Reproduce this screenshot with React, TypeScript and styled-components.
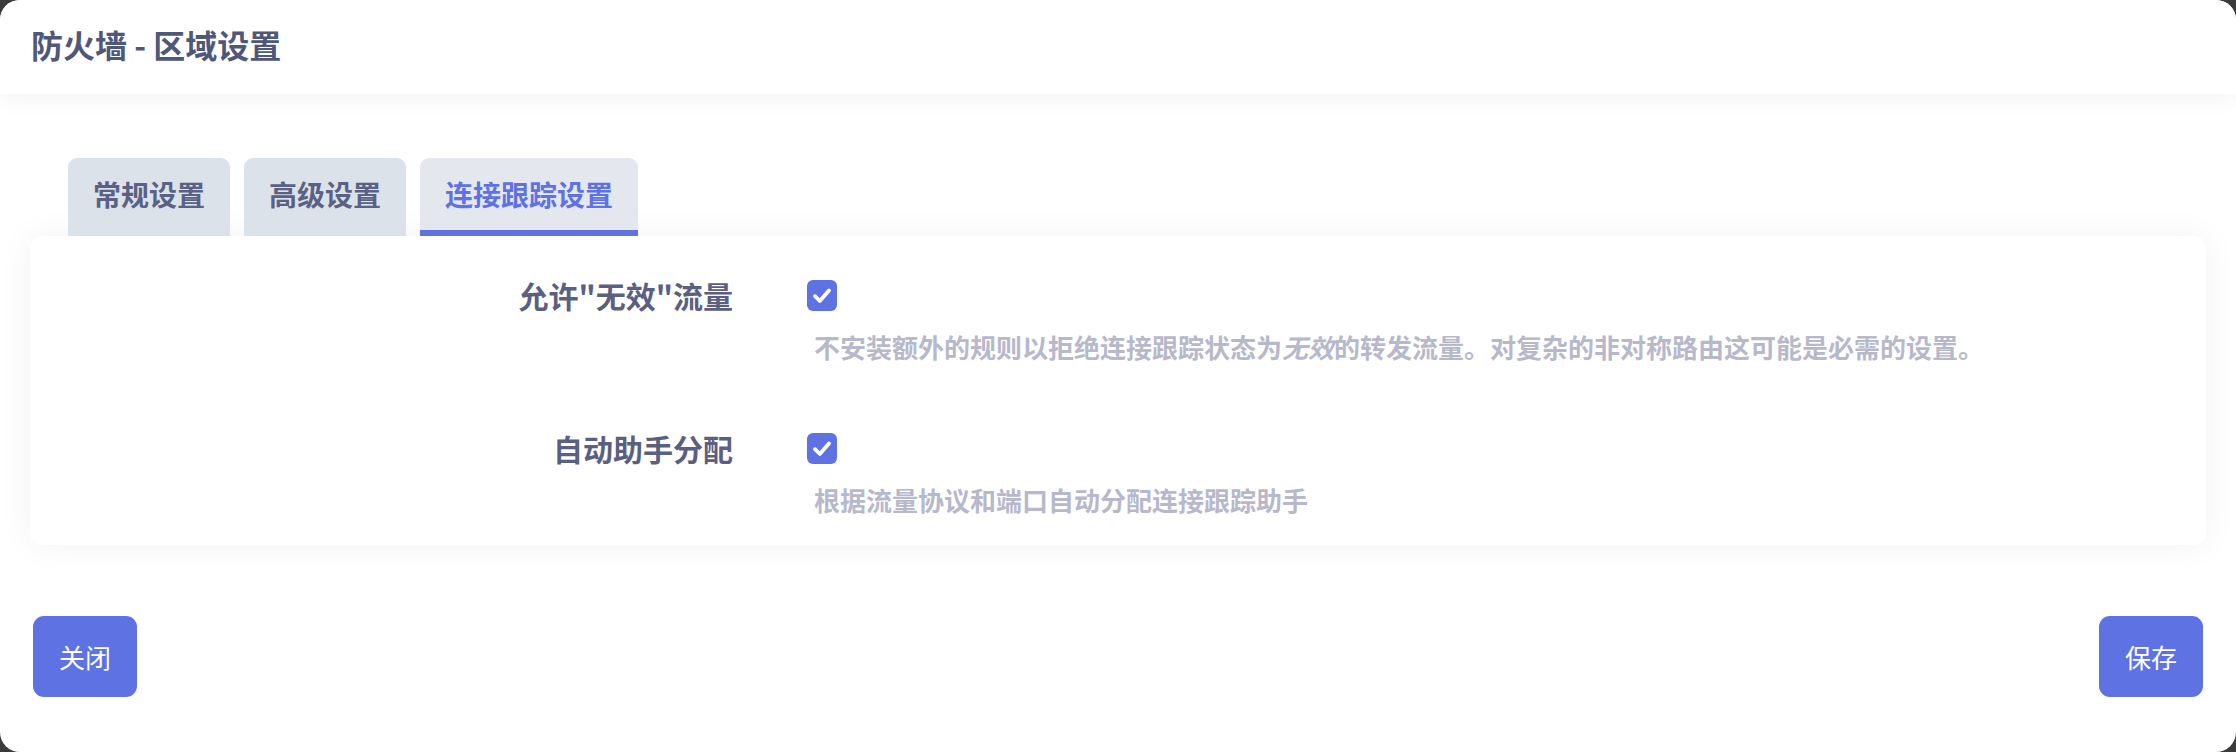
import React from "react";
import styled, { createGlobalStyle } from "styled-components";

const FONT = '"Noto Sans CJK SC", "Noto Sans", "Liberation Sans", sans-serif';
const PRIMARY = "#5e72e4";

const GlobalStyle = createGlobalStyle`
  html, body {
    margin: 0;
    padding: 0;
    background: #3b3b3b;
  }
  body {
    font-family: ${FONT};
  }
  * { box-sizing: border-box; }
`;

const Dialog = styled.div`
  width: 2236px;
  height: 752px;
  background: #ffffff;
  border-radius: 20px;
  overflow: hidden;
  display: flex;
  flex-direction: column;
`;

const Header = styled.header`
  position: relative;
  z-index: 2;
  height: 94px;
  flex: none;
  display: flex;
  align-items: center;
  padding: 0 31px 6px;
  background: #ffffff;
  box-shadow: 0 6px 22px rgba(20, 30, 60, 0.045);
`;

const Title = styled.h1`
  margin: 0;
  font-family: ${FONT};
  font-size: 32px;
  font-weight: 700;
  color: #4f5878;
  letter-spacing: 0;
`;

const Body = styled.main`
  display: flex;
  flex-direction: column;
  padding: 64px 30px 0;
`;

const TabList = styled.div`
  position: relative;
  z-index: 1;
  display: flex;
  gap: 14px;
  padding-left: 38px;
`;

const Tab = styled.button<{ $active?: boolean }>`
  height: 78px;
  padding: 0 25px;
  border: none;
  border-bottom: 6px solid ${(p) => (p.$active ? PRIMARY : "transparent")};
  border-radius: 9px 9px 0 0;
  background: ${(p) => (p.$active ? "#e4e8ee" : "#dce2e9")};
  font-family: ${FONT};
  font-size: 28px;
  font-weight: 700;
  color: ${(p) => (p.$active ? PRIMARY : "#5a6184")};
  display: flex;
  align-items: center;
  cursor: pointer;
`;

const Card = styled.section`
  background: #ffffff;
  border-radius: 12px;
  box-shadow: 0 0 34px rgba(20, 30, 60, 0.055);
  padding: 44px 0 26px;
  display: flex;
  flex-direction: column;
  gap: 67px;
`;

const Row = styled.div`
  display: grid;
  grid-template-columns: 703px 1fr;
  column-gap: 74px;
  align-items: start;
`;

const Label = styled.label`
  height: 30px;
  display: flex;
  align-items: center;
  justify-content: flex-end;
  font-family: ${FONT};
  font-size: 30px;
  font-weight: 700;
  color: #5b5f80;
  white-space: nowrap;
`;

const Control = styled.div`
  display: flex;
  flex-direction: column;
  align-items: flex-start;
`;

const CheckBox = styled.span`
  width: 30px;
  height: 31px;
  border-radius: 6px;
  background: ${PRIMARY};
  display: flex;
  align-items: center;
  justify-content: center;
`;

const Description = styled.p`
  margin: 16px 0 0 7px;
  font-family: ${FONT};
  font-size: 26px;
  line-height: 39px;
  font-weight: 600;
  color: #b7b9cb;
  white-space: nowrap;

  em {
    font-style: italic;
  }
`;

const Footer = styled.footer`
  display: flex;
  justify-content: space-between;
  padding: 71px 33px 0;
`;

const Button = styled.button`
  height: 81px;
  padding: 0 26px;
  border: none;
  border-radius: 11px;
  background: ${PRIMARY};
  color: #ffffff;
  font-family: ${FONT};
  font-size: 26px;
  font-weight: 400;
  cursor: pointer;
`;

const Check = () => (
  <svg width="30" height="31" viewBox="0 0 30 31" aria-hidden="true">
    <path
      d="M8 16.2 L12.8 21 L22 10.4"
      fill="none"
      stroke="#ffffff"
      strokeWidth="3.8"
      strokeLinecap="round"
      strokeLinejoin="round"
    />
  </svg>
);

export default function App() {
  return (
    <>
      <GlobalStyle />
      <Dialog>
        <Header>
          <Title>防火墙 - 区域设置</Title>
        </Header>
        <Body>
          <TabList>
            <Tab>常规设置</Tab>
            <Tab>高级设置</Tab>
            <Tab $active>连接跟踪设置</Tab>
          </TabList>
          <Card>
            <Row>
              <Label>允许"无效"流量</Label>
              <Control>
                <CheckBox>
                  <Check />
                </CheckBox>
                <Description>
                  不安装额外的规则以拒绝连接跟踪状态为<em>无效</em>的转发流量。对复杂的非对称路由这可能是必需的设置。
                </Description>
              </Control>
            </Row>
            <Row>
              <Label>自动助手分配</Label>
              <Control>
                <CheckBox>
                  <Check />
                </CheckBox>
                <Description>根据流量协议和端口自动分配连接跟踪助手</Description>
              </Control>
            </Row>
          </Card>
        </Body>
        <Footer>
          <Button>关闭</Button>
          <Button>保存</Button>
        </Footer>
      </Dialog>
    </>
  );
}
